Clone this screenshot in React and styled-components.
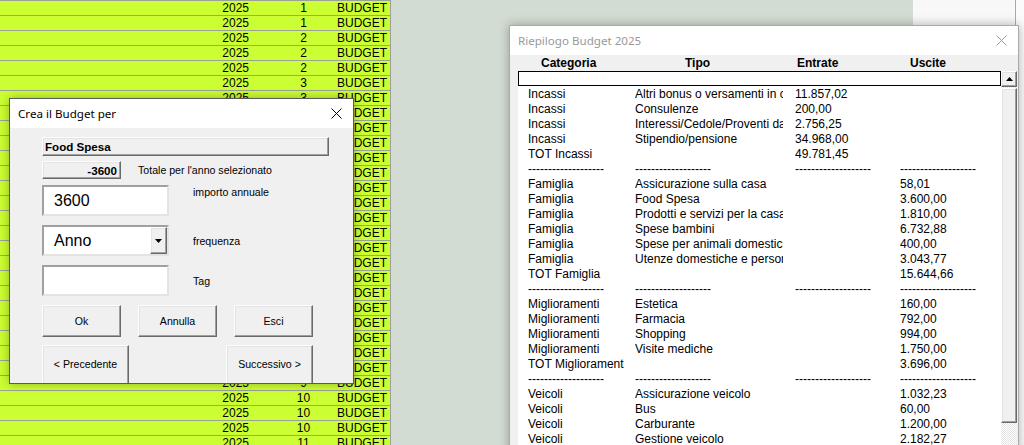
import React from "react";
import styled, { createGlobalStyle, css } from "styled-components";

const GlobalStyle = createGlobalStyle`
  html, body {
    margin: 0;
    padding: 0;
    overflow: hidden;
  }
  body {
    font-family: "Liberation Sans", Arial, sans-serif;
  }
`;

const raised = css`
  background: #f0f0f0;
  border: 1px solid;
  border-color: #ffffff #696969 #696969 #ffffff;
  box-shadow: inset -1px -1px 0 #a0a0a0, inset 1px 1px 0 #e3e3e3;
  box-sizing: border-box;
`;

const sunken = css`
  background: #ffffff;
  border: 2px solid;
  border-color: #a0a0a0 #e3e3e3 #e3e3e3 #a0a0a0;
  box-sizing: border-box;
`;

/* ---------- desktop / sheet ---------- */

const Screen = styled.div`
  position: relative;
  width: 1024px;
  height: 445px;
  overflow: hidden;
  display: flex;
  background: #d3dcd2;
`;

const Sheet = styled.div`
  width: 390px;
  flex-shrink: 0;
  background: #ccff33;
  border-top: 1px solid #9ba196;
  border-right: 1px solid #9ba196;
`;

const SheetRow = styled.div`
  display: flex;
  height: 14px;
  border-bottom: 1px solid #9ba196;
  font: 12px/14px "Liberation Sans", Arial, sans-serif;
  color: #000;
`;

const SheetCell = styled.div`
  width: ${(p) => p.$w}px;
  padding-right: ${(p) => p.$pr || 0}px;
  text-align: ${(p) => p.$align || "left"};
  box-sizing: border-box;
  white-space: nowrap;
`;

const Backdrop = styled.div`
  width: 522px;
  flex-shrink: 0;
`;

const SidePanel = styled.div`
  width: 102px;
  flex-shrink: 0;
  background: #f8f8f8;
  border-right: 1px solid #a9a9a9;
`;

const Tail = styled.div`
  flex: 1;
  background: #fbfbfb;
`;

/* ---------- windows ---------- */

const Window = styled.div`
  position: absolute;
  left: ${(p) => p.$x}px;
  top: ${(p) => p.$y}px;
  width: ${(p) => p.$w}px;
  height: ${(p) => p.$h}px;
  box-sizing: border-box;
  display: flex;
  flex-direction: column;
  background: #f0f0f0;
  border: 1px solid ${(p) => (p.$inactive ? "#aaaaaa" : "#5a5a5a")};
  box-shadow: 0 0 10px rgba(0, 0, 0, 0.3);
`;

const TitleBar = styled.div`
  height: 29px;
  flex-shrink: 0;
  display: flex;
  align-items: center;
  justify-content: space-between;
  padding: 0 11px 0 8px;
  background: #ffffff;
  font: 11.6px "Noto Sans", "Open Sans", sans-serif;
  color: ${(p) => (p.$inactive ? "#999999" : "#000000")};
`;

const CloseIcon = ({ color }) => (
  <svg width="11" height="11" viewBox="0 0 11 11">
    <path d="M0.5 0.5 L10.5 10.5 M10.5 0.5 L0.5 10.5" stroke={color} strokeWidth="1" fill="none" />
  </svg>
);

/* ---------- budget form ---------- */

const FormBody = styled.div`
  flex: 1;
  overflow: hidden;
  padding: 9px 0 0 32px;
  display: flex;
  flex-direction: column;
  font: 10.6px "Liberation Sans", Arial, sans-serif;
  color: #000;
`;

const FormRow = styled.div`
  display: flex;
  align-items: ${(p) => p.$align || "center"};
  margin-top: ${(p) => p.$mt || 0}px;
  gap: ${(p) => p.$gap || 0}px;
`;

const NameBar = styled.div`
  ${raised};
  width: 287px;
  height: 19px;
  padding-left: 2px;
  font-weight: bold;
  font-size: 11.6px;
  line-height: 17px;
`;

const TotalBox = styled.div`
  ${raised};
  width: 79px;
  height: 18px;
  padding-right: 3px;
  text-align: right;
  font-weight: bold;
  font-size: 11.6px;
  line-height: 17px;
`;

const FieldLabel = styled.div`
  margin-left: ${(p) => p.$ml}px;
  padding-top: ${(p) => p.$pt || 0}px;
  white-space: nowrap;
`;

const TextBox = styled.div`
  ${sunken};
  width: 127px;
  height: 31px;
  padding-left: 10px;
  font-size: 16px;
  line-height: 27px;
`;

const Combo = styled.div`
  ${sunken};
  width: 127px;
  height: 31px;
  display: flex;
  font-size: 16px;
  line-height: 27px;
`;

const ComboText = styled.div`
  flex: 1;
  padding-left: 10px;
`;

const ComboButton = styled.div`
  ${raised};
  width: 17px;
  display: flex;
  align-items: center;
  justify-content: center;
`;

const Button = styled.div`
  ${raised};
  width: ${(p) => p.$w}px;
  height: ${(p) => p.$h}px;
  display: flex;
  align-items: center;
  justify-content: center;
  white-space: nowrap;
  padding-bottom: ${(p) => p.$pb || 0}px;
`;

const ArrowDown = () => (
  <svg width="7" height="4" viewBox="0 0 7 4">
    <polygon points="0,0 7,0 3.5,4" fill="#000" />
  </svg>
);

const ArrowUp = () => (
  <svg width="7" height="4" viewBox="0 0 7 4">
    <polygon points="0,4 7,4 3.5,0" fill="#000" />
  </svg>
);

/* ---------- summary ---------- */

const SummaryBody = styled.div`
  flex: 1;
  overflow: hidden;
  padding: 0 1px 0 8px;
  display: flex;
  flex-direction: column;
  font: 12px "Liberation Sans", Arial, sans-serif;
  color: #000;
`;

const HeadRow = styled.div`
  height: 15px;
  padding-top: 1px;
  flex-shrink: 0;
  display: grid;
  grid-template-columns: 144px 112px 113px 1fr;
  padding-left: 23px;
  font-weight: bold;
  line-height: 15px;
`;

const ListArea = styled.div`
  flex: 1;
  display: flex;
  overflow: hidden;
`;

const List = styled.div`
  flex: 1;
  background: #ffffff;
`;

const FocusRow = styled.div`
  height: 15px;
  box-sizing: border-box;
  border: 1px solid #000;
`;

const ListRow = styled.div`
  height: 14px;
  padding-top: 1px;
  display: grid;
  grid-template-columns: 107px 160px 105px 1fr;
  padding-left: 10px;
  line-height: 14px;
`;

const ListCell = styled.div`
  max-width: ${(p) => (p.$clip ? `${p.$clip}px` : "none")};
  overflow: hidden;
  white-space: nowrap;
`;

const ScrollBar = styled.div`
  width: 16px;
  display: flex;
  flex-direction: column;
  background: repeating-conic-gradient(#ffffff 0 25%, #e3e3e3 0 50%) 0 0 / 2px 2px;
`;

const ScrollUp = styled.div`
  ${raised};
  height: 16px;
  display: flex;
  align-items: center;
  justify-content: center;
`;

const ScrollThumb = styled.div`
  ${raised};
  margin-top: 1px;
  height: 335px;
`;

const months = [1, 1, 2, 2, 2, 3, 3, 3, 4, 4, 4, 5, 5, 5, 6, 6, 6, 7, 7, 7, 8, 8, 8, 9, 9, 9, 10, 10, 10, 11];

const DASH = "-------------------";

const rows = [
  ["Incassi", "Altri bonus o versamenti in conto", "11.857,02", ""],
  ["Incassi", "Consulenze", "200,00", ""],
  ["Incassi", "Interessi/Cedole/Proventi da investimenti", "2.756,25", ""],
  ["Incassi", "Stipendio/pensione", "34.968,00", ""],
  ["TOT Incassi", "", "49.781,45", ""],
  [DASH, DASH, DASH, DASH],
  ["Famiglia", "Assicurazione sulla casa", "", "58,01"],
  ["Famiglia", "Food Spesa", "", "3.600,00"],
  ["Famiglia", "Prodotti e servizi per la casa", "", "1.810,00"],
  ["Famiglia", "Spese bambini", "", "6.732,88"],
  ["Famiglia", "Spese per animali domestici", "", "400,00"],
  ["Famiglia", "Utenze domestiche e personali", "", "3.043,77"],
  ["TOT Famiglia", "", "", "15.644,66"],
  [DASH, DASH, DASH, DASH],
  ["Miglioramenti", "Estetica", "", "160,00"],
  ["Miglioramenti", "Farmacia", "", "792,00"],
  ["Miglioramenti", "Shopping", "", "994,00"],
  ["Miglioramenti", "Visite mediche", "", "1.750,00"],
  ["TOT Miglioramenti", "", "", "3.696,00"],
  [DASH, DASH, DASH, DASH],
  ["Veicoli", "Assicurazione veicolo", "", "1.032,23"],
  ["Veicoli", "Bus", "", "60,00"],
  ["Veicoli", "Carburante", "", "1.200,00"],
  ["Veicoli", "Gestione veicolo", "", "2.182,27"],
  ["Veicoli", "Manutenzione", "", "850,00"],
];

export default function App() {
  return (
    <>
      <GlobalStyle />
      <Screen>
        <Sheet>
          {months.map((m, i) => (
            <SheetRow key={i}>
              <SheetCell $w={270} $pr={21} $align="right">2025</SheetCell>
              <SheetCell $w={67} $align="center">{m}</SheetCell>
              <SheetCell $w={53} $pr={3} $align="right">BUDGET</SheetCell>
            </SheetRow>
          ))}
        </Sheet>
        <Backdrop />
        <SidePanel />
        <Tail />

        <Window $x={9} $y={98} $w={345} $h={286}>
          <TitleBar>
            <span>Crea il Budget per</span>
            <CloseIcon color="#000" />
          </TitleBar>
          <FormBody>
            <NameBar>Food Spesa</NameBar>
            <FormRow $mt={5}>
              <TotalBox>-3600</TotalBox>
              <FieldLabel $ml={17}>Totale per l'anno selezionato</FieldLabel>
            </FormRow>
            <FormRow $mt={6} $align="flex-start">
              <TextBox>3600</TextBox>
              <FieldLabel $ml={24} $pt={1}>importo annuale</FieldLabel>
            </FormRow>
            <FormRow $mt={9}>
              <Combo>
                <ComboText>Anno</ComboText>
                <ComboButton>
                  <ArrowDown />
                </ComboButton>
              </Combo>
              <FieldLabel $ml={24}>frequenza</FieldLabel>
            </FormRow>
            <FormRow $mt={9}>
              <TextBox />
              <FieldLabel $ml={24}>Tag</FieldLabel>
            </FormRow>
            <FormRow $mt={9} $gap={17}>
              <Button $w={79} $h={32}>Ok</Button>
              <Button $w={79} $h={32}>Annulla</Button>
              <Button $w={79} $h={32}>Esci</Button>
            </FormRow>
            <FormRow $mt={8} $gap={97} $align="flex-start">
              <Button $w={87} $h={45} $pb={8}>&lt; Precedente</Button>
              <Button $w={87} $h={45} $pb={8}>Successivo &gt;</Button>
            </FormRow>
          </FormBody>
        </Window>

        <Window $x={509} $y={25} $w={510} $h={440} $inactive>
          <TitleBar $inactive>
            <span>Riepilogo Budget 2025</span>
            <CloseIcon color="#9a9a9a" />
          </TitleBar>
          <SummaryBody>
            <HeadRow>
              <span>Categoria</span>
              <span>Tipo</span>
              <span>Entrate</span>
              <span>Uscite</span>
            </HeadRow>
            <ListArea>
              <List>
                <FocusRow />
                {rows.map((r, i) => (
                  <ListRow key={i}>
                    <ListCell $clip={96}>{r[0]}</ListCell>
                    <ListCell $clip={148}>{r[1]}</ListCell>
                    <ListCell>{r[2]}</ListCell>
                    <ListCell>{r[3]}</ListCell>
                  </ListRow>
                ))}
              </List>
              <ScrollBar>
                <ScrollUp>
                  <ArrowUp />
                </ScrollUp>
                <ScrollThumb />
              </ScrollBar>
            </ListArea>
          </SummaryBody>
        </Window>
      </Screen>
    </>
  );
}
